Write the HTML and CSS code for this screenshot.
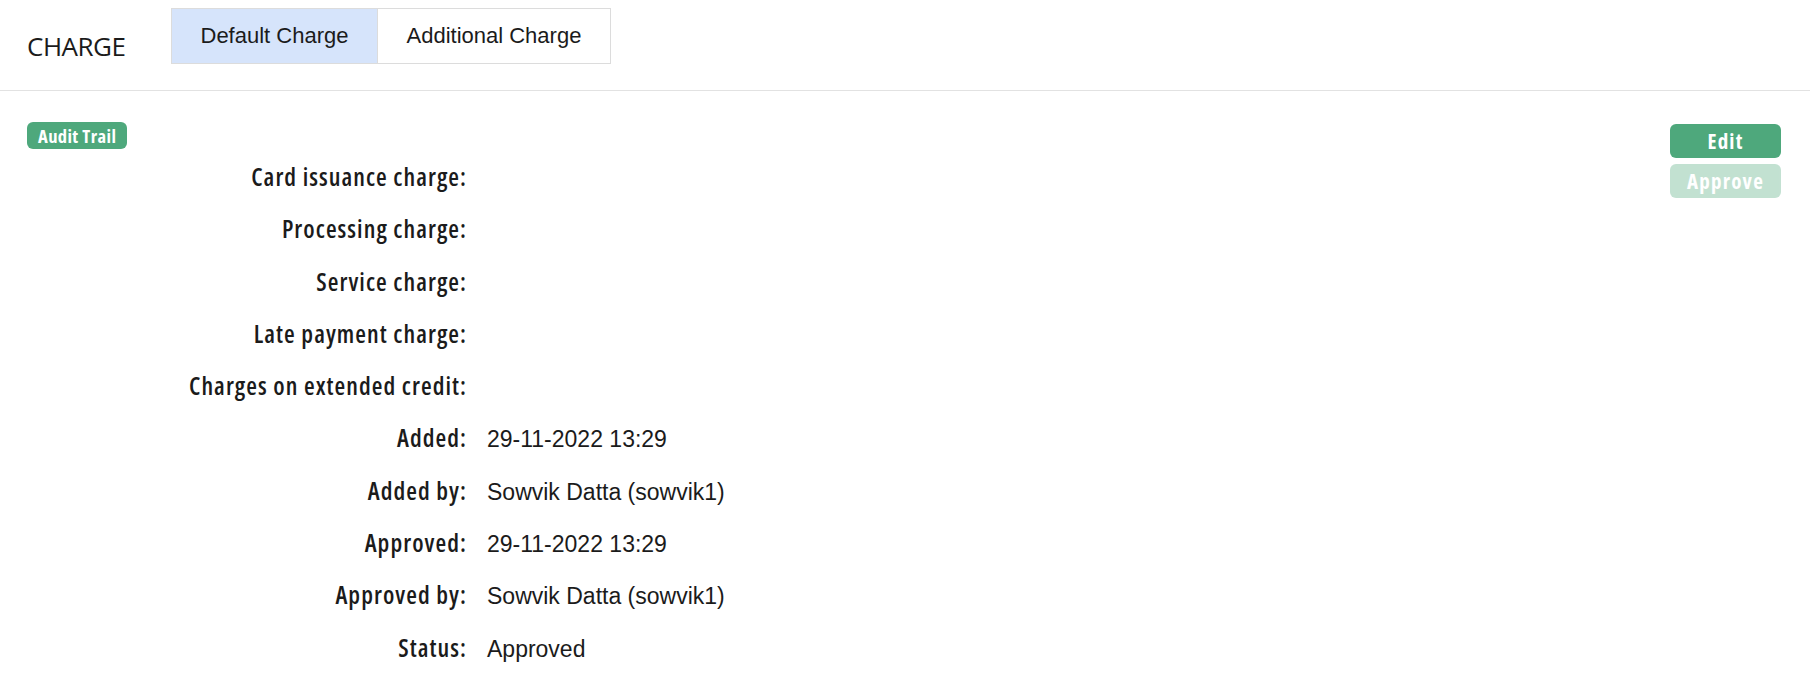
FILE: index.html
```html
<!DOCTYPE html>
<html lang="en">
<head>
<meta charset="utf-8">
<title>Charge</title>
<link rel="stylesheet" href="styles.css">
</head>
<body>
<header class="topbar">
  <h1 class="title">CHARGE</h1>
  <nav class="tabs">
    <span class="tab active">Default Charge</span>
    <span class="tab">Additional Charge</span>
  </nav>
</header>
<main class="content">
  <section class="details">
    <span class="badge">Audit Trail</span>
    <dl class="fields">
      <dt>Card issuance charge:</dt><dd></dd>
      <dt>Processing charge:</dt><dd></dd>
      <dt>Service charge:</dt><dd></dd>
      <dt>Late payment charge:</dt><dd></dd>
      <dt>Charges on extended credit:</dt><dd></dd>
      <dt>Added:</dt><dd>29-11-2022 13:29</dd>
      <dt>Added by:</dt><dd>Sowvik Datta (sowvik1)</dd>
      <dt>Approved:</dt><dd>29-11-2022 13:29</dd>
      <dt>Approved by:</dt><dd>Sowvik Datta (sowvik1)</dd>
      <dt>Status:</dt><dd>Approved</dd>
    </dl>
  </section>
  <aside class="actions">
    <button class="btn">Edit</button>
    <button class="btn disabled" disabled>Approve</button>
  </aside>
</main>
</body>
</html>
```

FILE: styles.css
```css
* { box-sizing: border-box; }

body {
  margin: 0;
  background: #ffffff;
  color: #1b1b1b;
  font-family: "Liberation Sans", Arial, sans-serif;
}

.topbar {
  display: flex;
  align-items: flex-start;
  height: 91px;
  padding: 8px 0 0 27px;
  border-bottom: 1px solid #e2e2e2;
}

.title {
  margin: 24px 0 0 0;
  width: 144px;
  font-family: "Open Sans", sans-serif;
  font-weight: normal;
  font-size: 26px;
  letter-spacing: -0.5px;
  line-height: 28px;
  white-space: nowrap;
}

.tabs {
  display: flex;
  border: 1px solid #dcdcdc;
}

.tab {
  display: block;
  height: 54px;
  line-height: 54px;
  padding: 0 28.5px;
  font-size: 22px;
  white-space: nowrap;
}

.tab + .tab {
  border-left: 1px solid #dcdcdc;
}

.tab.active {
  background: #d6e4fb;
}

.content {
  display: flex;
  justify-content: space-between;
  padding: 31px 29px 0 27px;
}

.badge {
  display: inline-block;
  height: 27px;
  line-height: 27px;
  padding: 0 11px;
  border-radius: 6px;
  background: #4ea87c;
  color: #fff;
  font-family: "Open Sans", sans-serif;
  font-stretch: 75%;
  font-weight: 700;
  font-size: 18.5px;
  letter-spacing: 0.4px;
}

.fields {
  display: grid;
  grid-template-columns: 440px auto;
  grid-auto-rows: 30px;
  column-gap: 20px;
  row-gap: 22.3px;
  margin: 13px 0 0 0;
  align-items: baseline;
}

.fields dt {
  text-align: right;
  font-family: "Open Sans", sans-serif;
  font-stretch: 75%;
  font-weight: 600;
  font-size: 24.5px;
  letter-spacing: 1.05px;
  line-height: 30px;
  white-space: nowrap;
}

.fields dd {
  margin: 0;
  font-size: 23px;
  line-height: 30px;
  white-space: nowrap;
}

.actions {
  display: flex;
  flex-direction: column;
  gap: 6px;
  margin-top: 2px;
}

.btn {
  width: 111px;
  height: 34px;
  padding: 0;
  border: none;
  border-radius: 6px;
  background: #4ea87c;
  color: #fff;
  font-family: "Open Sans", sans-serif;
  font-stretch: 75%;
  font-weight: 700;
  font-size: 21px;
  letter-spacing: 1.2px;
  line-height: 34px;
}

.btn.disabled {
  opacity: 0.34;
}
```
